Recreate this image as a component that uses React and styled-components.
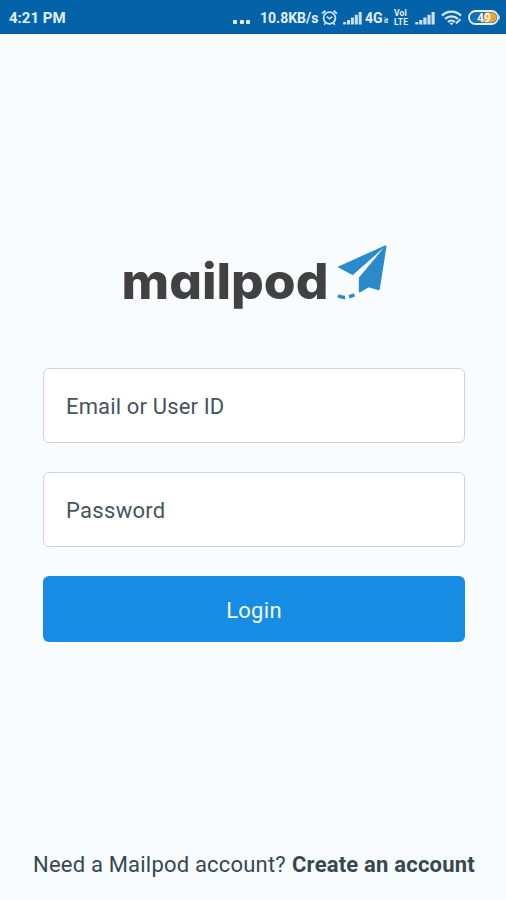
import React, { useState } from "react";
import styled, { createGlobalStyle } from "styled-components";

const SignalIcon = ({ width }) => (
  <Icon $width={width} viewBox="0 0 19 14" height="14" preserveAspectRatio="none">
    <path
      d="M0.2 11h2.9v2.4H0.2zM4 9h3v4.4H4zM7.9 6.5h3v6.9h-3zM11.8 3.8h3v9.6h-3zM15.7 1h3v12.4h-3z"
      fill="#c9e0f5"
    />
  </Icon>
);

const AlarmIcon = () => (
  <Icon $width={17} viewBox="0 0 17 17" height="17" fill="none" stroke="#cfe4f6">
    <circle cx="8.5" cy="9" r="5.9" strokeWidth="1.8" />
    <path d="M1 4.6 4.4 1.7M16 4.6l-3.4-2.9" strokeWidth="1.9" />
    <path d="M5.7 7.6 8.5 9.8l2.8-2.2M4.4 14l-1.2 1.7M12.6 14l1.2 1.7" strokeWidth="1.5" />
  </Icon>
);

const WifiIcon = () => (
  <Icon $width={21} viewBox="0 0 21 16" height="16" fill="none" stroke="#d3e7f8">
    <path d="M1 5.6C6.4.2 14.6.2 20 5.6" strokeWidth="2.3" />
    <path d="M4.1 8.9c3.7-3.5 9.1-3.5 12.8 0" strokeWidth="2.3" />
    <path d="M7 12c2-1.9 5-1.9 7 0" strokeWidth="2.1" />
    <path d="M8.3 12.8h4.4L10.5 15.2z" fill="#d3e7f8" stroke="none" />
    <path d="m15 13.5 4.4-4.2" strokeWidth="2" />
  </Icon>
);

const BatteryIcon = () => (
  <Icon $width={32} viewBox="0 0 32 15" height="15">
    <rect x="1" y="1" width="29" height="13" rx="6.5" fill="#1870ae" stroke="#e1effa" strokeWidth="1.8" />
    <path d="M17 2.6h6.6a4.9 4.9 0 0 1 0 9.8H14.5z" fill="#f0a42f" />
    <path d="M31 5.5v4" stroke="#e1effa" strokeWidth="1.2" />
    <text
      x="9"
      y="12"
      fill="#fff"
      fontFamily="Roboto, sans-serif"
      fontSize="12.5"
      fontWeight="700"
      textLength="14"
      lengthAdjust="spacingAndGlyphs"
    >
      49
    </text>
  </Icon>
);

const PaperPlane = () => (
  <Plane viewBox="0 0 52 58" fill="#2a8acb" stroke="#2a8acb" strokeLinejoin="round">
    <path d="M49.2 2.9 2.4 24l14.3 7.6z" />
    <path d="M49.8 3.4 23.6 35v13.9l8.8-5.3 10.6 2.9z" strokeWidth="1.4" />
    <path d="M2 52.8q3.3 1.8 7.2 1.6M13 53.7q3.3-.6 5.4-1.9" fill="none" strokeWidth="3.5" />
  </Plane>
);

const App = () => {
  const [email, setEmail] = useState("");
  const [password, setPassword] = useState("");

  const handleSubmit = (ev) => {
    ev.preventDefault();
  };

  return (
    <>
      <GlobalStyle />
      <Wrapper>
        <StatusBar>
          <Time>4:21 PM</Time>
          <Dots>
            <Dot />
            <Dot />
            <Dot />
          </Dots>
          <Speed>10.8KB/s</Speed>
          <AlarmIcon />
          <Network>
            <SignalIcon width={19} />
            <NetworkType>4G</NetworkType>
            <DataFlow>it</DataFlow>
          </Network>
          <Volte>
            <span>Vol</span>
            <span>LTE</span>
          </Volte>
          <SignalIcon width={20} />
          <WifiIcon />
          <BatteryIcon />
        </StatusBar>
        <Logo>
          <Wordmark>
            <Name x="1.5" y="56" textLength="207" lengthAdjust="spacingAndGlyphs">
              mailpod
            </Name>
          </Wordmark>
          <PaperPlane />
        </Logo>
        <Form onSubmit={handleSubmit}>
          <Input
            type="text"
            placeholder="Email or User ID"
            $spacing="0.15px"
            value={email}
            onChange={(ev) => setEmail(ev.target.value)}
          />
          <Input
            type="password"
            placeholder="Password"
            $spacing="0.3px"
            value={password}
            onChange={(ev) => setPassword(ev.target.value)}
          />
          <Button type="submit">Login</Button>
        </Form>
        <Footer>
          <Question>Need a Mailpod account?</Question>
          <Create>Create an account</Create>
        </Footer>
      </Wrapper>
    </>
  );
};

const GlobalStyle = createGlobalStyle`
  * {
    box-sizing: border-box;
  }

  body {
    margin: 0;
    font-family: Roboto, sans-serif;
  }
`;

const Wrapper = styled.div`
  background: #f8fcff;
  color: #37474f;
  display: flex;
  flex-direction: column;
  width: 506px;
  height: 900px;
  overflow: hidden;
`;

const StatusBar = styled.div`
  display: flex;
  align-items: center;
  height: 34px;
  padding: 2px 6px 0 9px;
  background: #0463a8;
  border-bottom: 1px solid #0553a0;
  color: #e3f0fb;
  font-weight: 700;
  white-space: nowrap;
`;

const Icon = styled.svg`
  flex: none;
  width: ${(props) => props.$width}px;
`;

const Time = styled.span`
  font-size: 15px;
  margin-right: auto;
`;

const Dots = styled.div`
  display: flex;
  gap: 2.5px;
  margin: 8px 10px 0 0;
`;

const Dot = styled.span`
  width: 4px;
  height: 4px;
  background: #e3f0fb;
  border-radius: 1px;
`;

const Speed = styled.span`
  width: 61px;
  font-size: 14px;
`;

const Network = styled.div`
  display: flex;
  align-items: center;
  width: 50px;
  margin-left: 5px;
`;

const NetworkType = styled.span`
  font-size: 14px;
  margin-left: 3px;
  width: 19px;
`;

const DataFlow = styled.span`
  font-size: 7px;
  margin-top: 6px;
`;

const Volte = styled.div`
  display: flex;
  flex-direction: column;
  width: 15px;
  margin: 0 6px 0 1px;
  font-size: 8.5px;
  letter-spacing: 0.2px;
  line-height: 8.5px;

  & ~ svg + svg {
    margin-left: 6px;
  }
`;

const Logo = styled.div`
  display: flex;
  height: 75px;
  margin: 209px 0 0 120px;
`;

const Wordmark = styled.svg`
  width: 216px;
  height: 75px;
`;

const Name = styled.text`
  fill: #414142;
  font-family: Inter, sans-serif;
  font-size: 50px;
  font-weight: 800;
  font-feature-settings: "cv11" 1;
`;

const Plane = styled.svg`
  width: 52px;
  height: 58px;
`;

const Form = styled.form`
  display: flex;
  flex-direction: column;
  margin: 50px 41px 0 43px;
`;

const Input = styled.input`
  width: 422px;
  height: 75px;
  margin-bottom: 29px;
  padding: 1px 22px 0;
  background: #fff;
  border: 1.5px solid #ced4d8;
  border-radius: 6px;
  color: #37474f;
  font-family: inherit;
  font-size: 22px;
  letter-spacing: ${(props) => props.$spacing};
  outline: none;

  &::placeholder {
    color: #46545d;
    opacity: 1;
  }
`;

const Button = styled.button`
  width: 422px;
  height: 66px;
  padding: 2px 0 0;
  background: #168de2;
  border: none;
  border-radius: 6px;
  color: #f4faff;
  font-family: inherit;
  font-size: 22px;
  letter-spacing: 0.3px;
`;

const Footer = styled.div`
  display: flex;
  gap: 6px;
  margin: auto 0 21px 33px;
  font-size: 22px;
  line-height: 28px;
  white-space: nowrap;
`;

const Question = styled.span`
  letter-spacing: 0.2px;
`;

const Create = styled.a`
  font-weight: 700;
  letter-spacing: 0.2px;
`;

export default App;
